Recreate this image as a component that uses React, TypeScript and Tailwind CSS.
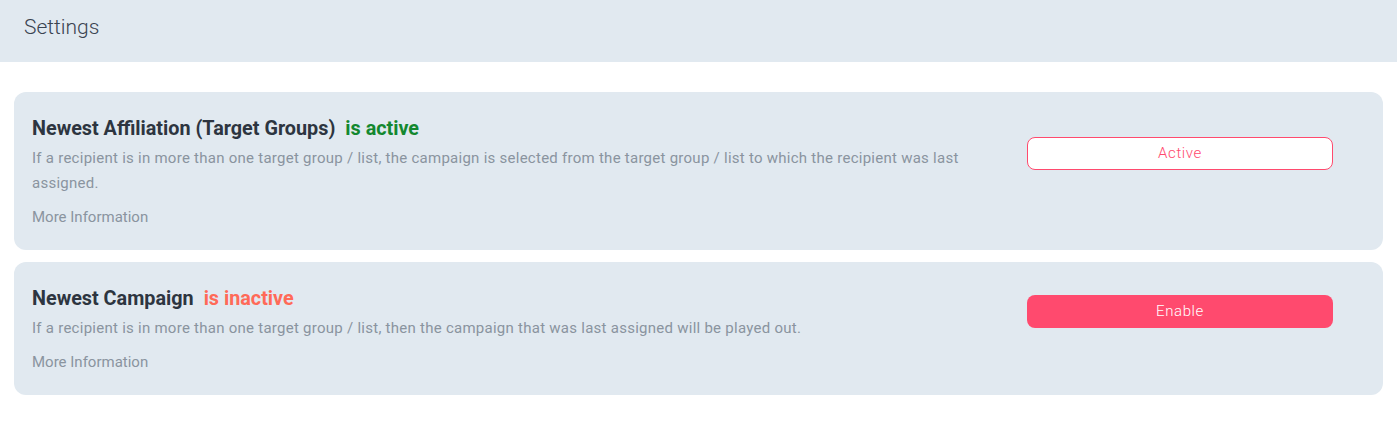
export default function App() {
  const cards = [
    {
      title: 'Newest Affiliation (Target Groups)',
      status: 'is active',
      active: true,
      text: 'If a recipient is in more than one target group / list, the campaign is selected from the target group / list to which the recipient was last assigned.',
    },
    {
      title: 'Newest Campaign',
      status: 'is inactive',
      active: false,
      text: 'If a recipient is in more than one target group / list, then the campaign that was last assigned will be played out.',
    },
  ]

  return (
    <div className="min-h-screen bg-white font-['Roboto',sans-serif]">
      {/* Header */}
      <div className="h-[62px] bg-[#e1e9f0] flex items-center px-6 pb-[6px]">
        <h1 className="text-[21px] font-light text-[#3a4350]">Settings</h1>
      </div>

      <div className="px-[14px] pt-[30px] flex flex-col gap-3">
        {cards.map(card => (
          <div key={card.title} className="bg-[#e1e9f0] rounded-xl px-[18px] pt-[23px] pb-[23px]">
            <div className="flex items-center">
              <div className="w-[975px]">
                <div className="text-[19.8px] leading-[28px] font-bold text-[#2d3540]">
                  {card.title}
                  <span className={`ml-[10px] ${card.active ? 'text-[#13882f]' : 'text-[#ff6a58]'}`}>{card.status}</span>
                </div>
                <p className="mt-[3px] text-[15px] leading-[25px] tracking-[0.26px] text-[#8a949f]">{card.text}</p>
              </div>
              <div className="ml-[20px] mb-[4px]">
                {card.active ? (
                  <button className="w-[306px] h-[33px] rounded-lg border border-[#ff4a6e] bg-white text-[15px] font-light tracking-[0.6px] text-[#ff4a6e]">
                    Active
                  </button>
                ) : (
                  <button className="w-[306px] h-[33px] rounded-lg bg-[#ff4a6e] text-[15px] font-light tracking-[0.6px] text-white">
                    Enable
                  </button>
                )}
              </div>
            </div>
            <div className="mt-[11px] text-[15px] leading-[20px] text-[#8a949f]">More Information</div>
          </div>
        ))}
      </div>
    </div>
  )
}
